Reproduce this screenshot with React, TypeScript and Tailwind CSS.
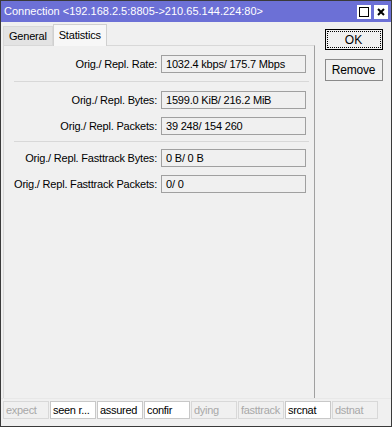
import React from 'react'

const FONT = { fontFamily: '"Liberation Sans", Arial, sans-serif' }

function Row({ label, value }: { label: string; value: string }) {
  return (
    <div className="flex items-center h-[26px]">
      <div className="w-[156px] text-right pr-[4px] whitespace-nowrap text-[11px] tracking-[-0.2px] text-black">{label}</div>
      <div className="w-[145px] h-[18px] border border-[#a0a0a0] bg-[#f0f0f0] px-[4px] text-[11px] tracking-[-0.2px] leading-[16px] text-black whitespace-nowrap overflow-hidden">
        {value}
      </div>
    </div>
  )
}

const FLAGS: { name: string; on: boolean }[] = [
  { name: 'expect', on: false },
  { name: 'seen r...', on: true },
  { name: 'assured', on: true },
  { name: 'confir', on: true },
  { name: 'dying', on: false },
  { name: 'fasttrack', on: false },
  { name: 'srcnat', on: true },
  { name: 'dstnat', on: false },
]

export default function App() {
  return (
    <div style={FONT} className="w-[392px] h-[427px] bg-[#f0f0f0] border border-[#3a3a3a] flex flex-col overflow-hidden text-[11px]">
      {/* title bar */}
      <div className="h-[21px] bg-[#6c70d6] flex items-center pl-[3px] pr-[3px] shrink-0">
        <div className="flex-1 text-white text-[11px] whitespace-nowrap">Connection &lt;192.168.2.5:8805-&gt;210.65.144.224:80&gt;</div>
        <div className="flex gap-[3px]">
          <div className="w-[14px] h-[14px] bg-white flex items-center justify-center">
            <div className="w-[10px] h-[10px] border border-black" />
          </div>
          <div className="w-[14px] h-[14px] bg-white flex items-center justify-center">
            <svg width="10" height="10" viewBox="0 0 10 10">
              <path d="M2 2 L8 8 M8 2 L2 8" stroke="#000" strokeWidth="2" />
            </svg>
          </div>
        </div>
      </div>

      <div className="flex flex-1 min-h-0">
        {/* left: tabs + panel */}
        <div className="w-[314px] pl-[2px] pt-[1px] flex flex-col">
          <div className="flex items-end h-[22px] tracking-[-0.2px]">
            <div className="h-[19px] px-[5px] bg-[#e3e3e3] border border-[#d8d8d8] border-b-0 flex items-center">General</div>
            <div className="h-[22px] px-[5px] bg-[#f7f7f7] border border-[#d0d0d0] border-b-0 flex items-center -mb-[1px] relative z-10">Statistics</div>
          </div>
          <div className="flex-1 border border-[#d8d8d8] border-r-[#a0a0a0] border-b-0 pt-[5px] pl-[1px]">
            <Row label="Orig./ Repl. Rate:" value="1032.4 kbps/ 175.7 Mbps" />
            <div className="h-px bg-[#d8d8d8] ml-[9px] mr-[5px] mt-[4px] mb-[5px]" />
            <Row label="Orig./ Repl. Bytes:" value="1599.0 KiB/ 216.2 MiB" />
            <Row label="Orig./ Repl. Packets:" value="39 248/ 154 260" />
            <div className="h-px bg-[#d8d8d8] ml-[9px] mr-[5px] mt-[2px] mb-[3px]" />
            <Row label="Orig./ Repl. Fasttrack Bytes:" value="0 B/ 0 B" />
            <Row label="Orig./ Repl. Fasttrack Packets:" value="0/ 0" />
          </div>
        </div>

        {/* right: buttons */}
        <div className="flex-1 flex flex-col items-center pt-[7px] pl-[1px] gap-[9px]">
          <div className="w-[58px] h-[21px] border border-black bg-[#f0f0f0] p-[1px]">
            <div className="w-full h-full border border-dotted border-black flex items-center justify-center text-black text-[12px]">OK</div>
          </div>
          <div className="w-[58px] h-[22px] border border-[#8a8a8a] bg-[#f0f0f0] flex items-center justify-center text-black text-[12px] tracking-[-0.2px]">Remove</div>
        </div>
      </div>

      {/* status bar */}
      <div className="h-[28px] shrink-0 flex pl-[2px] pt-[2px] gap-[1px] border-t border-[#e8e8e8] tracking-[-0.3px]">
        {FLAGS.map((f) => (
          <div
            key={f.name}
            className={
              'w-[46px] h-[18px] border pl-[2px] flex items-center whitespace-nowrap overflow-hidden ' +
              (f.on ? 'border-[#c8c8c8] bg-white text-black' : 'border-[#d8d8d8] bg-[#f0f0f0] text-[#a8a8a8]')
            }
          >
            {f.name}
          </div>
        ))}
      </div>
    </div>
  )
}
